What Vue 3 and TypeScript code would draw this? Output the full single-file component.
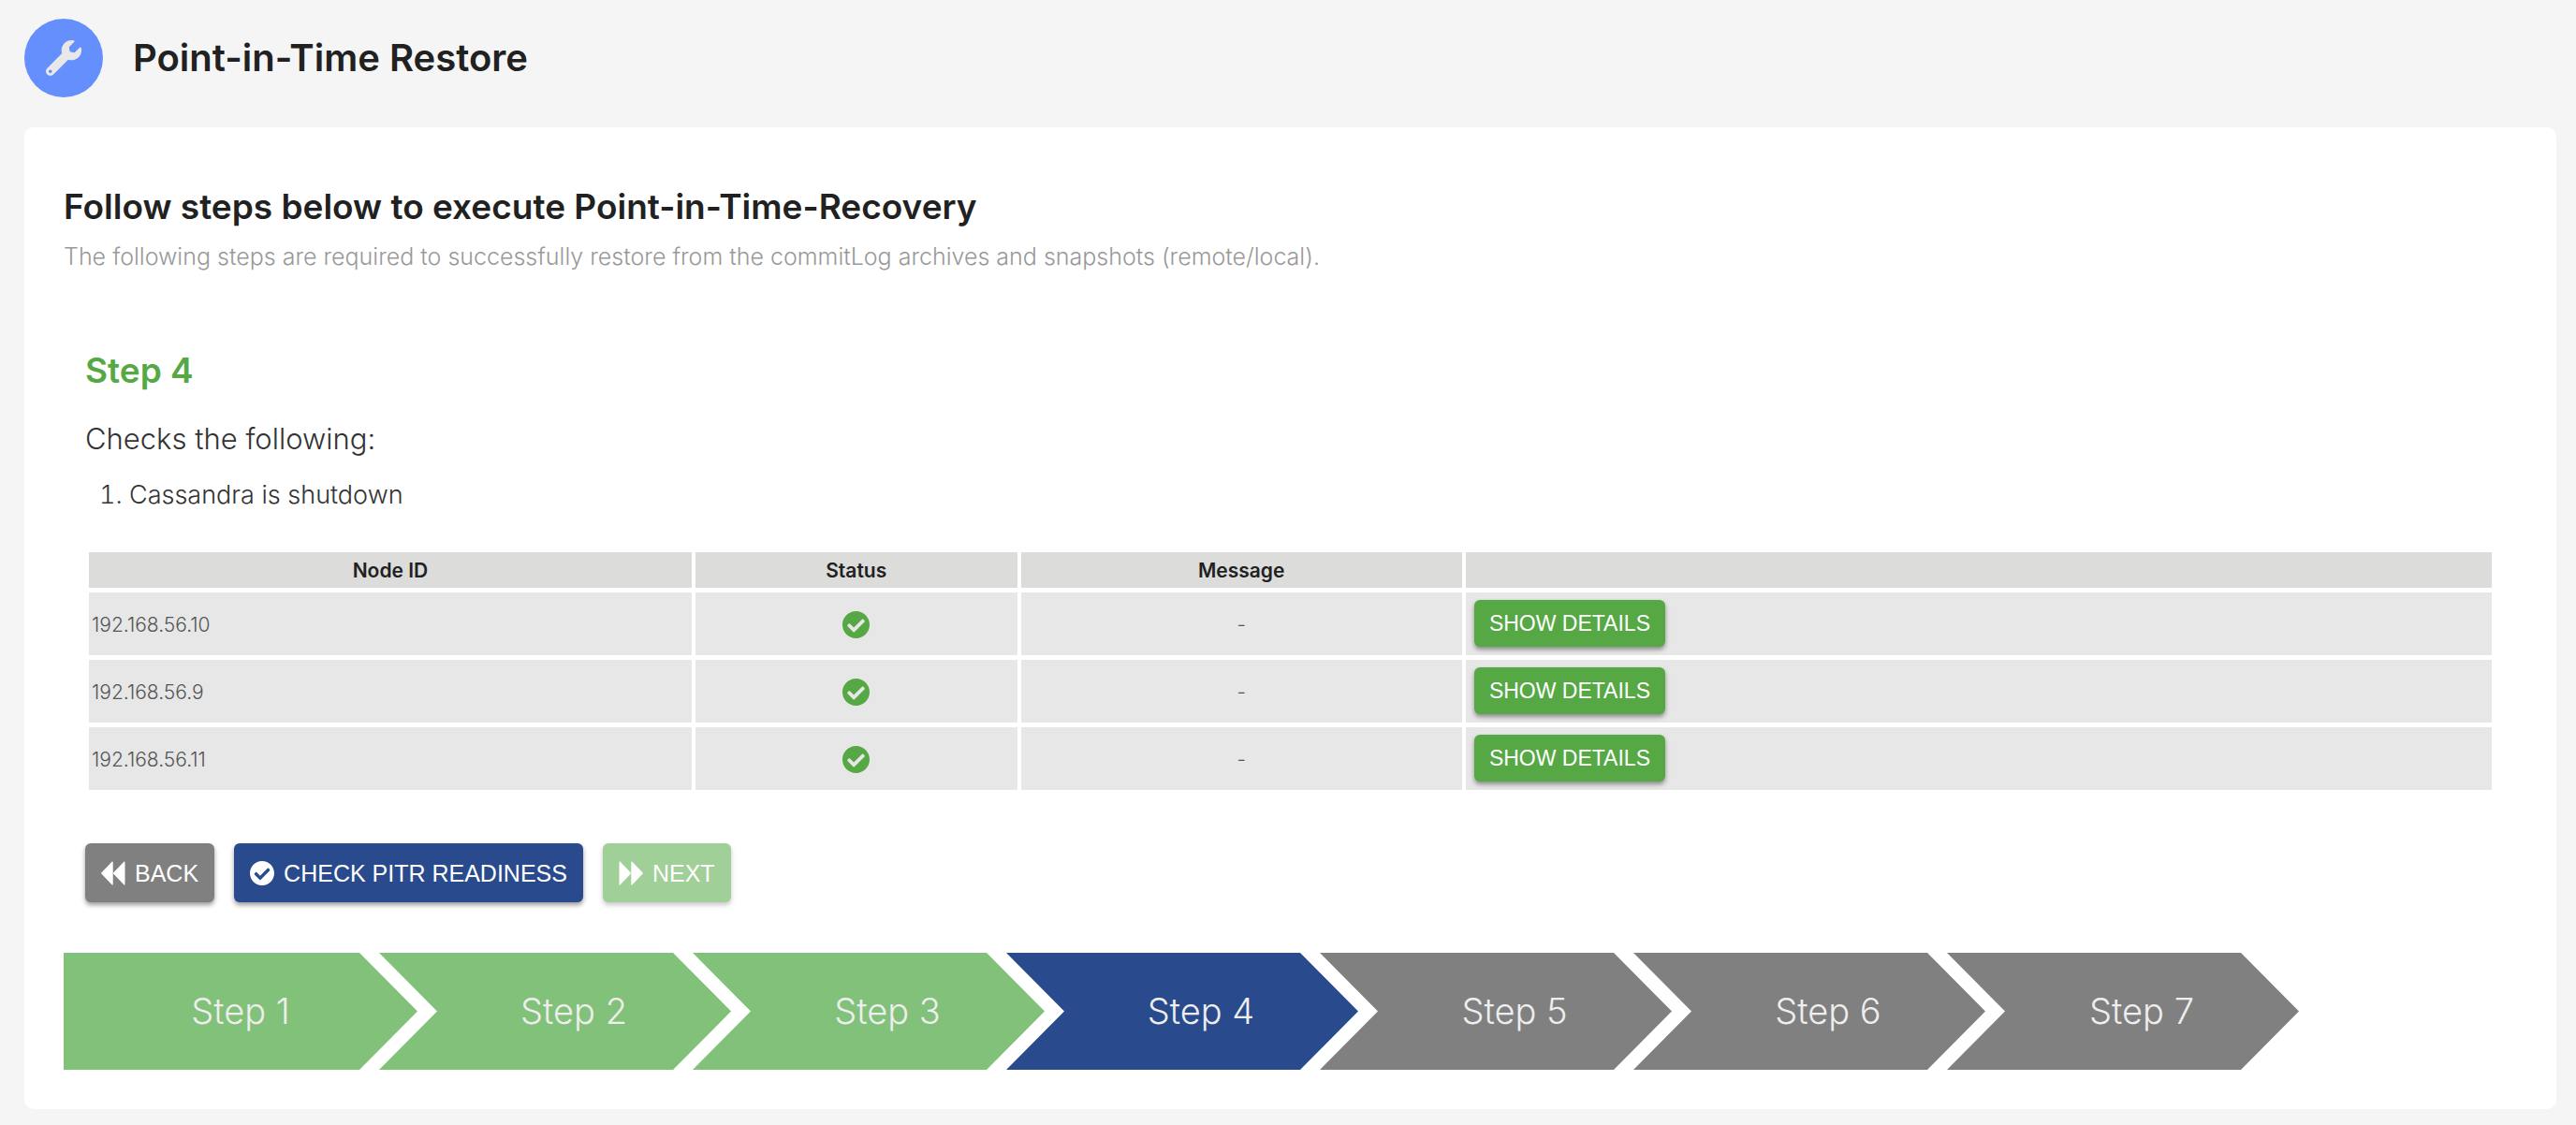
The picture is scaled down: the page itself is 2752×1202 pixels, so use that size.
<script setup lang="ts">
interface NodeCheck {
  id: string
  message: string
}

interface Step {
  label: string
  state: 'done' | 'current' | 'pending'
}

const nodes: NodeCheck[] = [
  { id: '192.168.56.10', message: '-' },
  { id: '192.168.56.9', message: '-' },
  { id: '192.168.56.11', message: '-' },
]

const currentStep = 4
const steps: Step[] = Array.from({ length: 7 }, (_, i) => {
  const n = i + 1
  return {
    label: `Step ${n}`,
    state: n < currentStep ? 'done' : n === currentStep ? 'current' : 'pending',
  }
})
</script>

<template>
  <div class="page">
    <header class="page-header">
      <span class="page-icon">
        <svg viewBox="0 0 512 512" aria-hidden="true">
          <path
            d="M507.73 109.1c-2.24-9.03-13.54-12.09-20.12-5.51l-74.36 74.36-67.88-11.31-11.31-67.88 74.36-74.36c6.62-6.62 3.43-17.9-5.66-20.16-47.38-11.74-99.55.91-136.58 37.93-39.64 39.64-50.55 97.1-34.05 147.2L18.74 402.76c-24.99 24.99-24.99 65.51 0 90.5 24.99 24.99 65.51 24.99 90.5 0l213.21-213.21c50.12 16.71 107.47 5.68 147.37-34.22 37.07-37.07 49.7-89.32 37.91-136.73zM64 472c-13.25 0-24-10.75-24-24 0-13.26 10.75-24 24-24s24 10.74 24 24c0 13.25-10.75 24-24 24z"
          />
        </svg>
      </span>
      <h1>Point-in-Time Restore</h1>
    </header>

    <main class="card">
      <h2>Follow steps below to execute Point-in-Time-Recovery</h2>
      <p class="lead">
        The following steps are required to successfully restore from the commitLog archives and
        snapshots (remote/local).
      </p>

      <section class="step-body">
        <h3>Step 4</h3>
        <p class="checks-title">Checks the following:</p>
        <ol class="checks">
          <li>Cassandra is shutdown</li>
        </ol>

        <table>
          <colgroup>
            <col class="col-node" />
            <col class="col-status" />
            <col class="col-message" />
            <col />
          </colgroup>
          <thead>
            <tr>
              <th scope="col">Node ID</th>
              <th scope="col">Status</th>
              <th scope="col">Message</th>
              <td></td>
            </tr>
          </thead>
          <tbody>
            <tr v-for="node in nodes" :key="node.id">
              <td>{{ node.id }}</td>
              <td class="center">
                <svg class="status-icon" viewBox="0 0 496 496" role="img" aria-label="OK">
                  <path
                    d="M496 248c0 137-111 248-248 248S0 385 0 248 111 0 248 0s248 111 248 248zM219.300 379.300l184-184c6.200-6.200 6.200-16.400 0-22.600l-22.600-22.600c-6.200-6.200-16.400-6.200-22.600 0L208 300.100l-70.100-70.100c-6.200-6.200-16.400-6.200-22.600 0l-22.600 22.600c-6.200 6.200-6.200 16.400 0 22.600l104 104c6.200 6.300 16.400 6.300 22.600.1z"
                  />
                </svg>
              </td>
              <td class="center">{{ node.message }}</td>
              <td class="action">
                <button type="button" class="btn btn-small btn-green">SHOW DETAILS</button>
              </td>
            </tr>
          </tbody>
        </table>

        <div class="actions">
          <button type="button" class="btn btn-gray">
            <svg class="btn-icon" viewBox="0 0 512 512" aria-hidden="true">
              <path d="M250 20v472c0 10-10 14-18 8L10 272c-8-8-8-24 0-32L232 12c8-6 18-2 18 8zM502 20v472c0 10-10 14-18 8L262 272c-8-8-8-24 0-32L484 12c8-6 18-2 18 8z" />
            </svg>
            BACK
          </button>
          <button type="button" class="btn btn-blue">
            <svg class="btn-icon" viewBox="0 0 496 496" aria-hidden="true">
              <path
                d="M496 248c0 137-111 248-248 248S0 385 0 248 111 0 248 0s248 111 248 248zM219.300 379.300l184-184c6.200-6.200 6.200-16.400 0-22.600l-22.600-22.600c-6.200-6.200-16.400-6.200-22.600 0L208 300.100l-70.100-70.100c-6.200-6.200-16.400-6.200-22.600 0l-22.600 22.600c-6.200 6.200-6.200 16.400 0 22.600l104 104c6.200 6.300 16.400 6.300 22.600.1z"
              />
            </svg>
            CHECK PITR READINESS
          </button>
          <button type="button" class="btn btn-green btn-next" disabled>
            <svg class="btn-icon" viewBox="0 0 512 512" aria-hidden="true">
              <path d="M262 20v472c0 10 10 14 18 8l222-228c8-8 8-24 0-32L280 12c-8-6-18-2-18 8zM10 20v472c0 10 10 14 18 8l222-228c8-8 8-24 0-32L28 12c-8-6-18-2-18 8z" />
            </svg>
            NEXT
          </button>
        </div>
      </section>

      <ol class="progress">
        <li v-for="step in steps" :key="step.label" :class="step.state">{{ step.label }}</li>
      </ol>
    </main>
  </div>
</template>

<style>
body {
  margin: 0;
  background: #f5f5f5;
}
</style>

<style scoped>
.page {
  box-sizing: border-box;
  padding: 20px 21px 17px 26px;
  background: #f5f5f5;
  color: #212121;
  font-family: Inter, "Liberation Sans", sans-serif;
}

.page-header {
  display: flex;
  align-items: center;
  gap: 32px;
  margin-bottom: 32px;
}

.page-icon {
  display: flex;
  align-items: center;
  justify-content: center;
  width: 84px;
  height: 84px;
  border-radius: 50%;
  background: #648ffc;
}

.page-icon svg {
  width: 38px;
  height: 38px;
  fill: #e8e8e8;
}

h1,
h2,
h3,
p,
ol {
  margin: 0;
}

h1 {
  font-size: 40px;
  line-height: 48px;
  font-weight: 600;
}

.card {
  padding: 61px 42px 42px;
  border-radius: 10px;
  background: #fff;
}

h2 {
  font-size: 37px;
  line-height: 48px;
  font-weight: 600;
}

.lead {
  margin-top: 13px;
  color: #999;
  font-size: 25px;
  line-height: 32px;
  font-weight: 300;
}

.step-body {
  padding: 82px 23px 0;
}

h3 {
  color: #56a845;
  font-size: 37px;
  line-height: 48px;
  font-weight: 600;
}

.checks-title {
  margin-top: 29px;
  color: #333;
  font-size: 31px;
  line-height: 40px;
  font-weight: 300;
}

.checks {
  margin: 24px 0 40px;
  padding-left: 47px;
  color: #333;
  font-size: 27px;
  line-height: 32px;
  font-weight: 300;
}

table {
  width: 100%;
  table-layout: fixed;
  border-spacing: 4px 5px;
  font-size: 21px;
  line-height: 30px;
}

.col-node {
  width: 25.2%;
}

.col-status {
  width: 13.45%;
}

.col-message {
  width: 18.45%;
}

th,
td {
  padding: 5px 3px 3px;
}

th,
thead td {
  background: #dcdcdb;
  font-weight: 600;
}

tbody td {
  background: #e7e7e7;
  color: #555;
  font-weight: 300;
}

.center {
  text-align: center;
}

.status-icon {
  display: block;
  width: 29px;
  height: 29px;
  margin: 0 auto;
  fill: #56a845;
}

.action {
  padding: 8px 9px 9px;
}

.btn {
  display: flex;
  align-items: center;
  gap: 10px;
  height: 63px;
  padding: 0 17px;
  border: 0;
  border-radius: 6px;
  box-shadow: 0 3px 5px rgba(0, 0, 0, 0.4);
  color: #fff;
  font-family: "Liberation Sans", Arial, sans-serif;
  font-size: 25px;
  line-height: 32px;
}

.btn-small {
  height: 50px;
  padding: 0 16px;
  font-size: 23px;
}

.btn-icon {
  width: 26px;
  height: 26px;
  fill: currentColor;
}

.btn-green {
  background: #56a845;
}

.btn-gray {
  background: #808080;
}

.btn-blue {
  background: #294b8d;
}

.btn-next {
  opacity: 0.55;
}

.actions {
  display: flex;
  gap: 21px;
  margin-top: 52px;
}

.progress {
  display: flex;
  gap: 0;
  margin-top: 54px;
  padding: 0;
  list-style: none;
}

.progress li {
  box-sizing: border-box;
  width: 376px;
  margin-right: -41px;
  padding-left: 40px;
  background: #808080;
  clip-path: polygon(0 0, calc(100% - 62px) 0, 100% 50%, calc(100% - 62px) 100%, 0 100%, 62px 50%);
  color: #eee;
  font-size: 38px;
  line-height: 125px;
  font-weight: 300;
  text-align: center;
}

.progress li:first-child {
  width: 378px;
  padding-left: 0;
  clip-path: polygon(0 0, calc(100% - 62px) 0, 100% 50%, calc(100% - 62px) 100%, 0 100%);
}

.progress .done {
  background: #82c179;
}

.progress .current {
  background: #294b8d;
}
</style>
